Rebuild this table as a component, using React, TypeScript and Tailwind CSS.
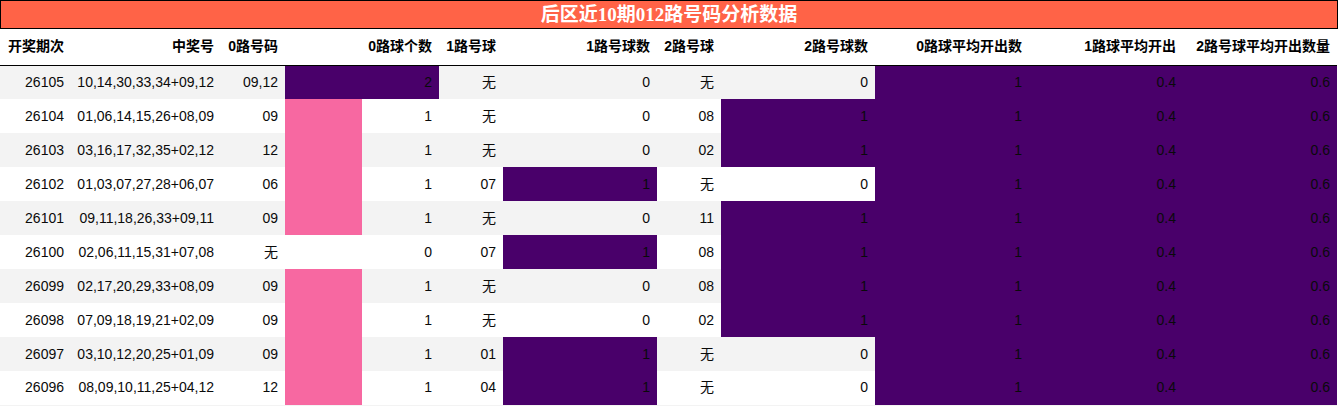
const PURPLE = '#49006a';
const PINK = '#f768a1';

type Row = {
  issue: string;
  nums: string;
  r0: string;
  c0: number;
  r1: string;
  c1: number;
  r2: string;
  c2: number;
};

const rows: Row[] = [
  { issue: '26105', nums: '10,14,30,33,34+09,12', r0: '09,12', c0: 2, r1: '无', c1: 0, r2: '无', c2: 0 },
  { issue: '26104', nums: '01,06,14,15,26+08,09', r0: '09', c0: 1, r1: '无', c1: 0, r2: '08', c2: 1 },
  { issue: '26103', nums: '03,16,17,32,35+02,12', r0: '12', c0: 1, r1: '无', c1: 0, r2: '02', c2: 1 },
  { issue: '26102', nums: '01,03,07,27,28+06,07', r0: '06', c0: 1, r1: '07', c1: 1, r2: '无', c2: 0 },
  { issue: '26101', nums: '09,11,18,26,33+09,11', r0: '09', c0: 1, r1: '无', c1: 0, r2: '11', c2: 1 },
  { issue: '26100', nums: '02,06,11,15,31+07,08', r0: '无', c0: 0, r1: '07', c1: 1, r2: '08', c2: 1 },
  { issue: '26099', nums: '02,17,20,29,33+08,09', r0: '09', c0: 1, r1: '无', c1: 0, r2: '08', c2: 1 },
  { issue: '26098', nums: '07,09,18,19,21+02,09', r0: '09', c0: 1, r1: '无', c1: 0, r2: '02', c2: 1 },
  { issue: '26097', nums: '03,10,12,20,25+01,09', r0: '09', c0: 1, r1: '01', c1: 1, r2: '无', c2: 0 },
  { issue: '26096', nums: '08,09,10,11,25+04,12', r0: '12', c0: 1, r1: '04', c1: 1, r2: '无', c2: 0 },
];

const headers = [
  '开奖期次',
  '中奖号',
  '0路号码',
  '0路球个数',
  '1路号球',
  '1路号球数',
  '2路号球',
  '2路号球数',
  '0路球平均开出数',
  '1路球平均开出',
  '2路号球平均开出数量',
];

const widths = [71, 150, 64, 154, 64, 154, 64, 154, 154, 154, 154];

// bar fill like pandas Styler.bar: width relative to column max, colour by value
function bar(value: number, max: number) {
  if (!value) return undefined;
  const pct = (value / max) * 100;
  const color = pct >= 100 ? PURPLE : PINK;
  return { background: `linear-gradient(90deg, ${color} ${pct}%, transparent ${pct}%)` };
}

const cell = 'h-[34px] pr-[7px] text-right whitespace-nowrap';

export default function App() {
  return (
    <div className="w-[1338px] bg-white font-['Liberation_Sans','Noto_Sans_CJK_SC',sans-serif] text-[14px] text-[#0a0a0a]">
      <div className="h-[29px] border border-black bg-[#ff6347] flex items-center justify-center font-['Liberation_Serif','Noto_Sans_CJK_SC',serif] text-[19px] font-bold text-white leading-none">
        后区近10期012路号码分析数据
      </div>
      <table className="table-fixed border-collapse w-[1337px] border-b border-[#f3f3f3]">
        <colgroup>
          {widths.map((w, i) => (
            <col key={i} style={{ width: w }} />
          ))}
        </colgroup>
        <thead>
          <tr className="border-b border-black">
            {headers.map((h) => (
              <th key={h} className="h-[36px] pr-[7px] text-right font-bold text-black whitespace-nowrap">
                {h}
              </th>
            ))}
          </tr>
        </thead>
        <tbody>
          {rows.map((r, i) => (
            <tr key={r.issue} className={i % 2 === 0 ? 'bg-[#f3f3f3]' : 'bg-white'}>
              <td className={cell}>{r.issue}</td>
              <td className={cell}>{r.nums}</td>
              <td className={cell}>{r.r0}</td>
              <td className={cell} style={bar(r.c0, 2)}>{r.c0}</td>
              <td className={cell}>{r.r1}</td>
              <td className={cell} style={bar(r.c1, 1)}>{r.c1}</td>
              <td className={cell}>{r.r2}</td>
              <td className={cell} style={bar(r.c2, 1)}>{r.c2}</td>
              <td className={cell} style={bar(1, 1)}>1</td>
              <td className={cell} style={bar(1, 1)}>0.4</td>
              <td className={cell} style={bar(1, 1)}>0.6</td>
            </tr>
          ))}
        </tbody>
      </table>
    </div>
  );
}
